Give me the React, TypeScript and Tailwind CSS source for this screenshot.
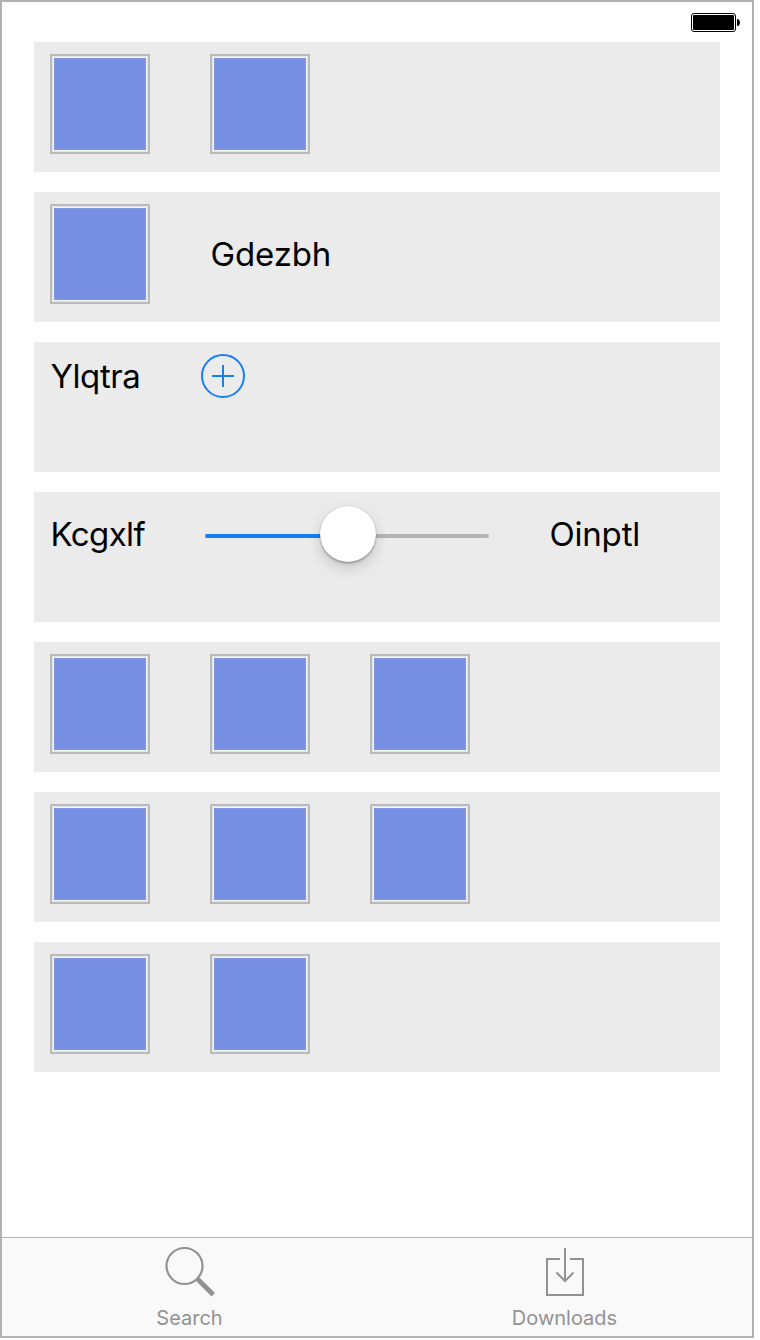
import React from "react";

function Row({ children }: { children: React.ReactNode }) {
  return (
    <div className="flex h-[130px] w-[686px] items-start gap-[60px] bg-[#ebebeb] px-4 pt-3">
      {children}
    </div>
  );
}

function Tile() {
  return (
    <div className="size-[100px] shrink-0 border-2 border-[#bababa] bg-[#e3e5ea] p-[2px]">
      <div className="size-full border border-[#8298e5] bg-[#768fe2] outline-1 outline-[#f1f3fb]" />
    </div>
  );
}

function Label({ children, className }: { children: string; className: string }) {
  return (
    <span className={`h-10 shrink-0 whitespace-nowrap pl-[0.5px] text-[33px] leading-10 text-black ${className}`}>
      {children}
    </span>
  );
}

function Tab({ label, children }: { label: string; children: React.ReactNode }) {
  return (
    <div className="flex flex-1 flex-col items-center pt-[8px] text-[#929292]">
      {children}
      <span className="mt-[8px] whitespace-nowrap text-[20px] leading-6">{label}</span>
    </div>
  );
}

export default function App() {
  return (
    <div className="min-h-[1340px] bg-white font-['Inter',sans-serif]">
      <div className="flex h-[1338px] w-[754px] flex-col border-2 border-[#b2b2b2] bg-white">
        <header className="flex h-10 shrink-0 justify-end pr-3 pt-[11px]">
          <svg width="49" height="19" viewBox="0 0 49 19">
            <rect x="0.5" y="0.5" width="44" height="18" rx="2.5" fill="white" stroke="black" />
            <rect x="2" y="2" width="41" height="15" rx="1" fill="black" />
            <path d="M46 6h1q2 1 2 3.5t-2 3.5h-1z" fill="black" />
          </svg>
        </header>
        <main className="flex flex-1 flex-col gap-5 px-8">
          <Row>
            <Tile />
            <Tile />
          </Row>
          <Row>
            <Tile />
            <Label className="mt-[30px] w-[122px] tracking-[-0.15px]">Gdezbh</Label>
          </Row>
          <Row>
            <Label className="mt-[2px] w-[91px] tracking-[-0.4px]">Ylqtra</Label>
            <svg width="44" height="44" viewBox="0 0 44 44" fill="none" stroke="#147efb" strokeWidth="2">
              <circle cx="22" cy="22" r="21" />
              <path d="M11 22h22M22 11v22" />
            </svg>
          </Row>
          <Row>
            <Label className="mt-[10px] w-[95px] tracking-[-0.6px]">Kcgxlf</Label>
            <div className="relative mt-[30px] flex h-1 w-[284px] shrink-0 overflow-visible rounded-full bg-[#b5b5b5]">
              <div className="h-1 w-1/2 rounded-l-full bg-[#147efb]" />
              <div className="absolute -top-7 left-[115px] size-14 rounded-full bg-white shadow-[0_0_1px_rgba(0,0,0,0.3),0_2px_2px_rgba(0,0,0,0.22),0_6px_14px_rgba(0,0,0,0.16)]" />
            </div>
            <Label className="mt-[10px] w-[92px] tracking-[-0.2px]">Oinptl</Label>
          </Row>
          <Row>
            <Tile />
            <Tile />
            <Tile />
          </Row>
          <Row>
            <Tile />
            <Tile />
            <Tile />
          </Row>
          <Row>
            <Tile />
            <Tile />
          </Row>
        </main>
        <nav className="flex h-[99px] shrink-0 border-t border-[#b2b2b2] bg-[#f9f9f9]">
          <Tab label="Search">
            <svg className="h-[52px] w-[50px]" viewBox="0 0 50 52" fill="none" stroke="currentColor">
              <circle cx="19.5" cy="20" r="18" strokeWidth="2.2" />
              <path d="M32 32.500L48.300 48.800" strokeWidth="4.8" />
            </svg>
          </Tab>
          <Tab label="Downloads">
            <svg className="h-[52px] w-[38px]" viewBox="0 0 38 52" fill="none" stroke="currentColor" strokeWidth="2">
              <path d="M14 13H1v36h36V13H24M19 2v33M10.500 26.500L19 35L27.500 26.500" />
            </svg>
          </Tab>
        </nav>
      </div>
    </div>
  );
}
